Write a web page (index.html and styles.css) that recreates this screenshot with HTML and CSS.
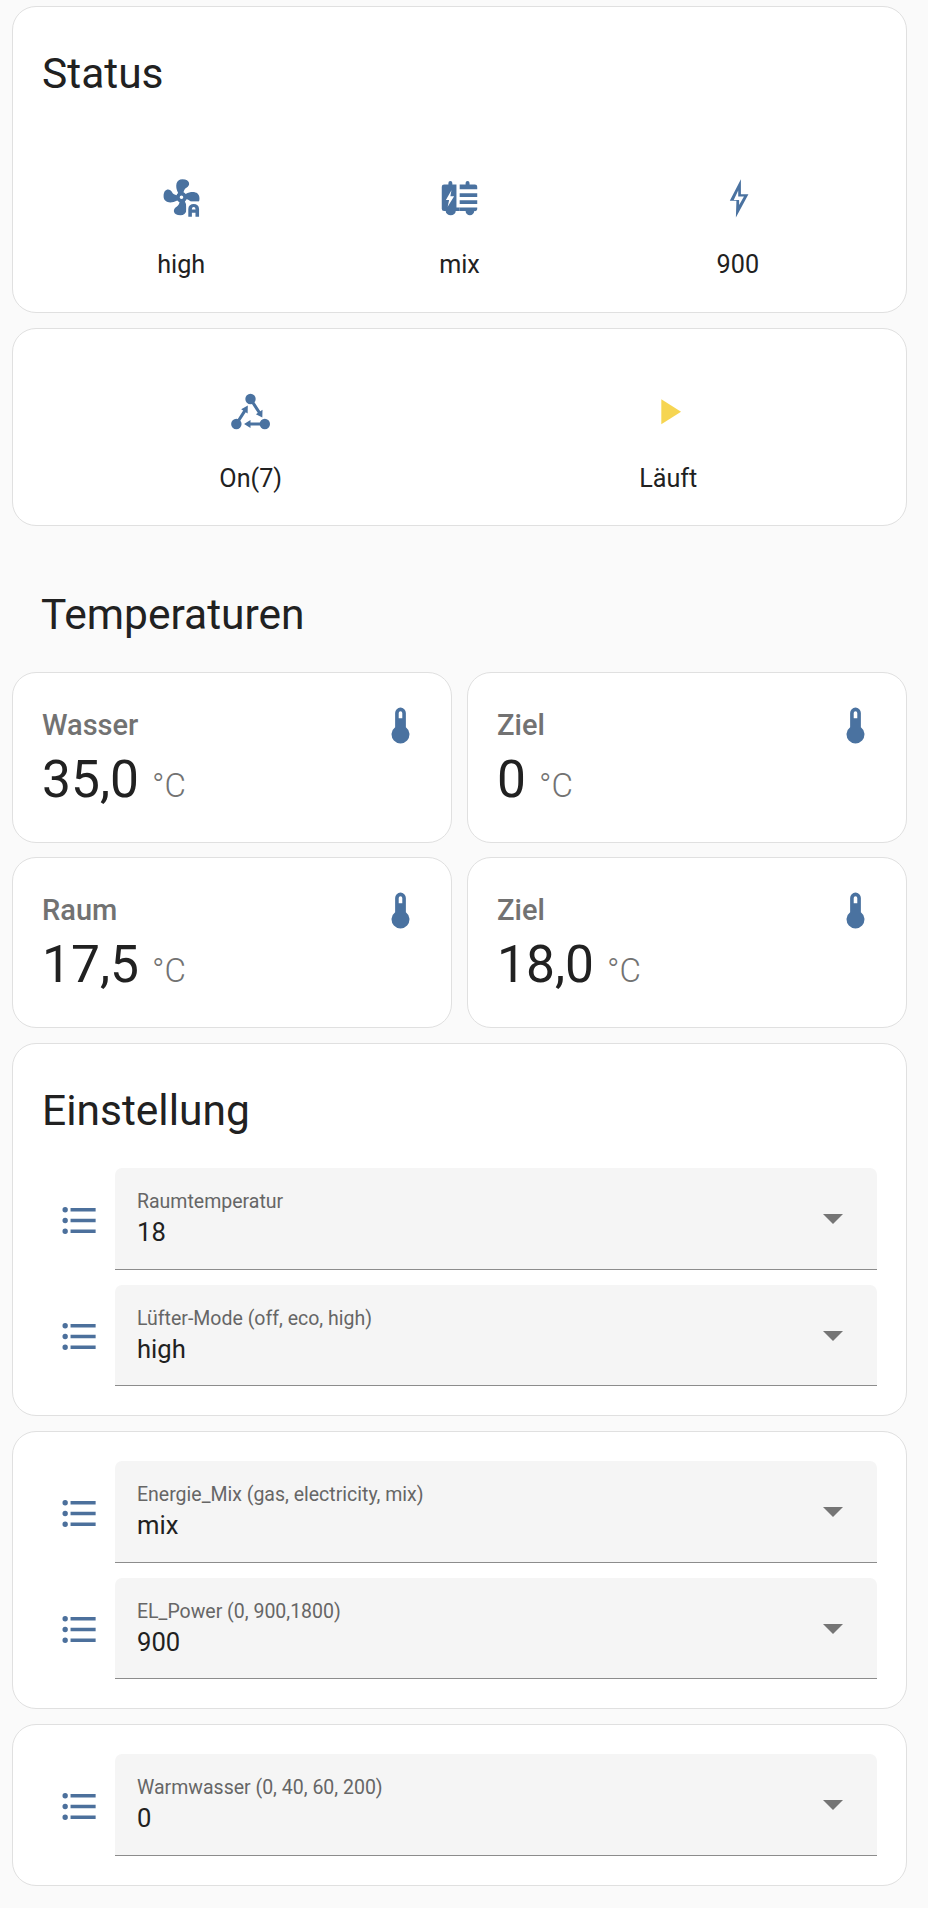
FILE: index.html
```html
<!DOCTYPE html>
<html lang="en">
<head>
  <meta charset="UTF-8">
  <meta name="viewport" content="width=device-width, initial-scale=1.0">
  <title>Heizung</title>
  <link rel="stylesheet" href="styles.css">
</head>
<body>

  <svg class="defs" width="0" height="0" aria-hidden="true">
    <defs>
      <mask id="fanCut">
        <rect width="24" height="24" fill="#fff"/>
        <rect x="14.6" y="13.6" width="10" height="11" fill="#000"/>
      </mask>
    </defs>
    <symbol id="i-list" viewBox="0 0 24 24"><path d="M7,5H21V7H7V5M7,13V11H21V13H7M4,4.5A1.5,1.5 0 0,1 5.5,6A1.5,1.5 0 0,1 4,7.5A1.5,1.5 0 0,1 2.5,6A1.5,1.5 0 0,1 4,4.5M4,10.5A1.5,1.5 0 0,1 5.5,12A1.5,1.5 0 0,1 4,13.5A1.5,1.5 0 0,1 2.5,12A1.5,1.5 0 0,1 4,10.5M7,19V17H21V19H7M4,16.5A1.5,1.5 0 0,1 5.5,18A1.5,1.5 0 0,1 4,19.5A1.5,1.5 0 0,1 2.5,18A1.5,1.5 0 0,1 4,16.5Z"/></symbol>
    <symbol id="i-thermo" viewBox="0 0 24 24"><path d="M15 13V5A3 3 0 0 0 9 5V13A5 5 0 1 0 15 13M12 4A1 1 0 0 1 13 5V8H11V5A1 1 0 0 1 12 4Z"/></symbol>
  </svg>

  <div class="dashboard">
    <section class="card status-card">
      <h2 class="card-title">Status</h2>
      <div class="glance three">
        <div class="glance-item">
          <svg class="icon" viewBox="0 0 24 24">
            <g mask="url(#fanCut)">
              <path transform="translate(0 -0.7)" d="M12,11A1,1 0 0,0 11,12A1,1 0 0,0 12,13A1,1 0 0,0 13,12A1,1 0 0,0 12,11M12.5,2C17,2 17.11,5.57 14.75,6.75C13.76,7.24 13.32,8.29 13.13,9.22C13.61,9.42 14.03,9.73 14.35,10.13C18.05,8.13 22.03,8.92 22.03,12.5C22.03,17 18.46,17.1 17.28,14.73C16.78,13.74 15.72,13.3 14.79,13.11C14.59,13.59 14.28,14 13.88,14.34C15.87,18.03 15.08,22 11.5,22C7,22 6.91,18.42 9.27,17.24C10.25,16.75 10.69,15.71 10.89,14.79C10.4,14.59 9.97,14.27 9.65,13.87C5.96,15.85 2,15.07 2,11.5C2,7 5.56,6.89 6.74,9.26C7.24,10.25 8.29,10.68 9.22,10.87C9.41,10.39 9.73,9.97 10.14,9.65C8.15,5.96 8.94,2 12.5,2Z"/>
            </g>
            <path fill-rule="evenodd" d="M15.8 22.2V17.8A3 2.8 0 0 1 21.8 17.8V22.2H19.8V19.9H17.8V22.2ZM17.8 18.1H19.8V17.8A1 1 0 0 0 17.8 17.8Z"/>
          </svg>
          <span>high</span>
        </div>
        <div class="glance-item">
          <svg class="icon" viewBox="0 0 24 24">
            <path fill-rule="evenodd" d="M3.4 4.2H5.8V3.3A1.1 1.1 0 0 1 8 3.3V4.2H10.3V17H12.1V19H9.9A2.8 2.4 0 0 1 4.3 19H3.4A1.3 1.3 0 0 1 2.1 17.7V5.5A1.3 1.3 0 0 1 3.4 4.2ZM7.5 7.4L4.4 12.8H6.2L5.4 16.6L9 10.8H6.9Z"/>
            <path d="M12.1 4.2H15.4V3.3A1.1 1.1 0 0 1 17.6 3.3V4.2H20.6A1.3 1.3 0 0 1 21.9 5.5V6.9H12.1ZM12.1 9.1H21.9V11.1H12.1ZM12.1 13H21.9V15H12.1ZM12.1 17H21.9V17.7A1.3 1.3 0 0 1 20.2 19A2.4 2.4 0 0 1 15.4 19H12.1Z"/>
          </svg>
          <span>mix</span>
        </div>
        <div class="glance-item">
          <svg class="icon" viewBox="0 0 24 24"><path fill-rule="evenodd" d="M13.9 1.3L7.7 13.3H11.4L11.1 22.6L18.1 9.6H13.9ZM9.9 12.9H12.9V15.6L15.6 10.9H12.4V7.6Z"/></svg>
          <span>900</span>
        </div>
      </div>
    </section>

    <section class="card mode-card">
      <div class="glance two">
        <div class="glance-item">
          <svg class="icon" viewBox="0 0 24 24">
            <circle cx="12" cy="5" r="2.9"/>
            <circle cx="4.1" cy="19" r="2.9"/>
            <circle cx="20" cy="19" r="2.9"/>
            <path class="link" d="M12 5L17 12.7M4.1 19L9 11.4M20 19H11.5"/>
            <path d="M18.6 15.4L18.7 11L15 13.5ZM10.5 8.7L10.4 13.1L6.8 10.7ZM8.4 19L12 16.8V21.2Z"/>
          </svg>
          <span>On(7)</span>
        </div>
        <div class="glance-item">
          <svg class="icon play" viewBox="0 0 24 24"><path d="M8,5.14V19.14L19,12.14L8,5.14Z"/></svg>
          <span>Läuft</span>
        </div>
      </div>
    </section>

    <h2 class="section-title">Temperaturen</h2>

    <div class="tiles">
      <div class="card tile">
        <div>
          <div class="tile-name">Wasser</div>
          <div class="tile-value">35,0<span class="unit">°C</span></div>
        </div>
        <svg class="icon"><use href="#i-thermo"/></svg>
      </div>
      <div class="card tile">
        <div>
          <div class="tile-name">Ziel</div>
          <div class="tile-value">0<span class="unit">°C</span></div>
        </div>
        <svg class="icon"><use href="#i-thermo"/></svg>
      </div>
      <div class="card tile">
        <div>
          <div class="tile-name">Raum</div>
          <div class="tile-value">17,5<span class="unit">°C</span></div>
        </div>
        <svg class="icon"><use href="#i-thermo"/></svg>
      </div>
      <div class="card tile">
        <div>
          <div class="tile-name">Ziel</div>
          <div class="tile-value">18,0<span class="unit">°C</span></div>
        </div>
        <svg class="icon"><use href="#i-thermo"/></svg>
      </div>
    </div>

    <section class="card form-card">
      <h2 class="card-title">Einstellung</h2>
      <div class="row">
        <svg class="icon"><use href="#i-list"/></svg>
        <div class="field">
          <div class="field-label">Raumtemperatur</div>
          <div class="field-value">18</div>
          <div class="arrow"></div>
        </div>
      </div>
      <div class="row">
        <svg class="icon"><use href="#i-list"/></svg>
        <div class="field">
          <div class="field-label">Lüfter-Mode (off, eco, high)</div>
          <div class="field-value">high</div>
          <div class="arrow"></div>
        </div>
      </div>
    </section>

    <section class="card form-card">
      <div class="row">
        <svg class="icon"><use href="#i-list"/></svg>
        <div class="field">
          <div class="field-label">Energie_Mix (gas, electricity, mix)</div>
          <div class="field-value">mix</div>
          <div class="arrow"></div>
        </div>
      </div>
      <div class="row">
        <svg class="icon"><use href="#i-list"/></svg>
        <div class="field">
          <div class="field-label">EL_Power (0, 900,1800)</div>
          <div class="field-value">900</div>
          <div class="arrow"></div>
        </div>
      </div>
    </section>

    <section class="card form-card">
      <div class="row">
        <svg class="icon"><use href="#i-list"/></svg>
        <div class="field">
          <div class="field-label">Warmwasser (0, 40, 60, 200)</div>
          <div class="field-value">0</div>
          <div class="arrow"></div>
        </div>
      </div>
    </section>
  </div>

</body>
</html>
```

FILE: styles.css
```css
body {
  font-family: Roboto, "Liberation Sans", sans-serif;
  background-color: #fafafa;
  color: #212121;
  margin: 0;
}

.defs {
  display: block;
  height: 0;
}

.dashboard {
  display: flex;
  flex-direction: column;
  gap: 15px;
  padding: 6px 21px 22px 12px;
}

.card {
  background-color: #fff;
  border: 1.5px solid #e0e0e0;
  border-radius: 24px;
  box-sizing: border-box;
}

.icon {
  display: block;
  width: 43px;
  height: 43px;
  fill: #4a72a0;
  flex-shrink: 0;
}

.icon.play {
  fill: #f6d552;
}

.icon .link {
  fill: none;
  stroke: #4a72a0;
  stroke-width: 1.7;
}

.card-title {
  font-size: 42.5px;
  font-weight: 400;
  line-height: 48px;
  margin: 0;
}

.status-card {
  height: 307px;
  padding: 43px 29px 0 29px;
}

.mode-card {
  height: 198px;
  padding: 61px 29px 0 29px;
}

.glance {
  display: grid;
}

.glance.three {
  grid-template-columns: repeat(3, 1fr);
  margin-top: 79px;
}

.glance.two {
  grid-template-columns: repeat(2, 1fr);
}

.glance-item {
  display: flex;
  flex-direction: column;
  align-items: center;
  gap: 29px;
  font-size: 25.2px;
  line-height: 32px;
}

.mode-card .glance-item {
  gap: 30px;
}

.section-title {
  font-size: 42.5px;
  font-weight: 400;
  line-height: 48px;
  margin: 50px 0 18px 29px;
}

.tiles {
  display: grid;
  grid-template-columns: 1fr 1fr;
  gap: 14px 15px;
}

.tile {
  height: 171px;
  padding: 34px 29px 0 29px;
  display: flex;
  justify-content: space-between;
  align-items: flex-start;
}

.tile .icon {
  margin-top: -3px;
}

.tile-name {
  font-size: 29px;
  font-weight: 500;
  line-height: 36px;
  color: #727272;
}

.tile-value {
  font-size: 51.5px;
  line-height: 64px;
  margin-top: 5px;
}

.unit {
  font-size: 33px;
  font-weight: 300;
  color: #727272;
  margin-left: 13px;
}

.form-card {
  padding: 29px;
  display: flex;
  flex-direction: column;
  gap: 15px;
}

.form-card .card-title {
  margin-top: 14px;
  margin-bottom: 18px;
}

.row {
  display: flex;
  align-items: center;
  gap: 14px;
}

.row .icon {
  margin-left: 16px;
  margin-top: 3px;
  fill: #4c709c;
}

.field {
  position: relative;
  flex: 1;
  height: 101.5px;
  box-sizing: border-box;
  background-color: #f5f5f5;
  border-bottom: 1.5px solid #8c8c8c;
  border-radius: 7px 7px 0 0;
  padding: 22px 22px 0 22px;
}

.field-label {
  font-size: 19.5px;
  line-height: 24px;
  color: #666;
}

.field-value {
  font-size: 25.6px;
  line-height: 32px;
  margin-top: 2px;
}

.arrow {
  position: absolute;
  top: 46px;
  right: 34px;
  border-left: 10px solid transparent;
  border-right: 10px solid transparent;
  border-top: 10px solid #757575;
}
```
